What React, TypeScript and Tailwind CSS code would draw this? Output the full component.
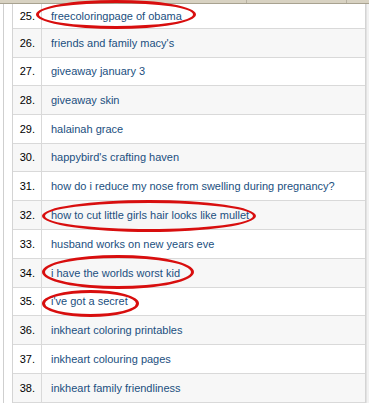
import type { CSSProperties } from "react"

type Row = { n: number; text: string; h: string }

const rows: Row[] = [
  { n: 25, text: "freecoloringpage of obama", h: "h-[25px]" },
  { n: 26, text: "friends and family macy's", h: "h-[29px]" },
  { n: 27, text: "giveaway january 3", h: "h-[28px]" },
  { n: 28, text: "giveaway skin", h: "h-[29px]" },
  { n: 29, text: "halainah grace", h: "h-[29px]" },
  { n: 30, text: "happybird's crafting haven", h: "h-[28px]" },
  { n: 31, text: "how do i reduce my nose from swelling during pregnancy?", h: "h-[29px]" },
  { n: 32, text: "how to cut little girls hair looks like mullet", h: "h-[29px]" },
  { n: 33, text: "husband works on new years eve", h: "h-[29px]" },
  { n: 34, text: "i have the worlds worst kid", h: "h-[29px]" },
  { n: 35, text: "i've got a secret", h: "h-[28px]" },
  { n: 36, text: "inkheart coloring printables", h: "h-[29px]" },
  { n: 37, text: "inkheart colouring pages", h: "h-[29px]" },
  { n: 38, text: "inkheart family friendliness", h: "h-[29px]" },
]

// hand-drawn marker circles over a few of the keywords
const marks: CSSProperties[] = [
  { left: 36, top: 0, width: 160, height: 29 },
  { left: 42, top: 200, width: 214, height: 32 },
  { left: 42, top: 255, width: 152, height: 34 },
  { left: 42, top: 290, width: 97, height: 27 },
]

export default function App() {
  return (
    <div className="relative w-[369px] h-[403px] overflow-hidden bg-white font-['Liberation_Sans',Arial,sans-serif] text-[11px]">
      {/* window header strip */}
      <div className="flex h-[4px] bg-[#d8d2c2] border-b border-[#a8a290]">
        <div className="w-[247px] border-r border-[#b8b2a2]" />
        <div className="w-[100px] border-r border-[#b8b2a2]" />
        <div className="flex-1" />
      </div>

      <div className="flex">
        <div className="w-[3px]" />
        <div className="w-px bg-[#cfcfcf]" />
        <div className="w-[8px]" />
        <div className="w-[354px] border-l border-r border-[#d4d4d4]">
          {rows.map((r) => (
            <div
              key={r.n}
              className={`flex ${r.h} border-b border-[#d9d9d9] ${r.n % 2 === 0 ? "bg-[#f7f7f7]" : "bg-white"}`}
            >
              <div className="w-[29px] shrink-0 flex items-center justify-end pr-[6px] border-r border-[#d9d9d9] text-black">
                {r.n}.
              </div>
              <div className="flex items-center pl-[9px] text-[#1b4f80] whitespace-nowrap">{r.text}</div>
            </div>
          ))}
        </div>
        <div className="w-[3px] bg-[#f2f2f2] border-l border-[#e2e2e2]" />
      </div>

      {marks.map((s, i) => (
        <div
          key={i}
          className="absolute rounded-[50%] border-[3px] border-[#d80e0e]"
          style={s}
        />
      ))}
    </div>
  )
}
